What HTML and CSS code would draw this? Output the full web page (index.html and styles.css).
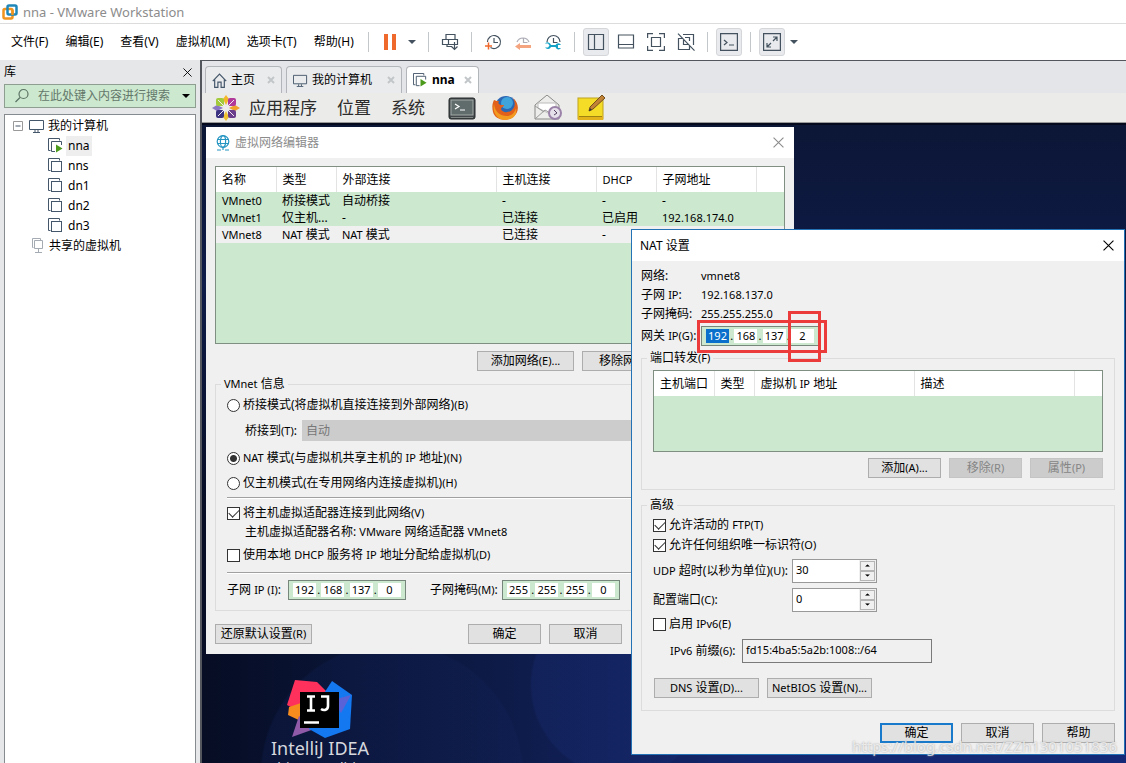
FILE: index.html
```html
<!DOCTYPE html>
<html lang="zh-CN">
<head>
<meta charset="utf-8">
<title>nna - VMware Workstation</title>
<link rel="stylesheet" href="styles.css">
</head>
<body>
<svg class="defs" aria-hidden="true">
  <symbol id="i-vm" viewBox="0 0 16 16"><path d="M2.500 12.500H.5V.5h11v2" fill="none" stroke="#44566a"/><rect x="3.500" y="3.500" width="10" height="10" fill="#fff" stroke="#44566a"/></symbol>
  <symbol id="i-vmrun" viewBox="0 0 16 16"><path d="M2.500 12.500H.5V.5h11v2M7 13.500H3.500v-10h10V7" fill="none" stroke="#44566a"/><path d="M8 6.500v8l6.500-4z" fill="#4c9a1c"/></symbol>
  <symbol id="i-monitor" viewBox="0 0 16 14"><path d="M.5 1.500h14v9H.5zM4 13.500h7M6 11v2M9 11v2" fill="none" stroke="#44566a"/></symbol>
  <symbol id="i-x" viewBox="0 0 10 10"><path d="M.5.5l9 9M9.500.5l-9 9" fill="none" stroke="currentColor"/></symbol>
  <symbol id="i-xb" viewBox="0 0 8 8"><path d="M1 1l6 6M7 1L1 7" fill="none" stroke="currentColor" stroke-width="2"/></symbol>
  <symbol id="i-down" viewBox="0 0 8 4"><path d="M0 0h8L4 4z" fill="currentColor"/></symbol>
  <symbol id="i-up" viewBox="0 0 8 4"><path d="M0 4h8L4 0z" fill="currentColor"/></symbol>
  <symbol id="i-clock" viewBox="0 0 18 18"><path d="M3.500 9a6.500 6.500 0 1 1 3 5.500M10 5v4.500h4" fill="none" stroke="currentColor" stroke-width="1.200"/></symbol>
</svg>

<header class="titlebar">
  <svg class="logo" viewBox="0 0 16 16"><rect x="1.500" y="5" width="9" height="9.500" rx="1.500" fill="none" stroke="#f0941e" stroke-width="2.500"/><rect x="5.500" y="1.500" width="9" height="9" rx="1.500" fill="none" stroke="#1e86b8" stroke-width="2.500"/><path d="M10.500 6v5" stroke="#f0941e" stroke-width="2.500"/></svg>
  <h1>nna - VMware Workstation</h1>
</header>

<div class="menubar">
  <nav class="menu">
    <a href="#">文件(F)</a><a href="#">编辑(E)</a><a href="#">查看(V)</a><a href="#">虚拟机(M)</a><a href="#">选项卡(T)</a><a href="#">帮助(H)</a>
  </nav>
  <div class="toolbar">
    <i class="sep"></i>
    <button aria-label="暂停"><svg viewBox="0 0 18 18"><path d="M3 1h4v16H3zM11 1h4v16h-4z" fill="#f0692c"/></svg></button>
    <button class="caret" aria-label="电源选项"><svg viewBox="0 0 8 4"><use href="#i-down"/></svg></button>
    <i class="sep"></i>
    <button aria-label="发送按键"><svg viewBox="0 0 18 18"><path d="M5 6.500V1.500h9v5M1.500 6.500h6v5h-6zM8 6.500h8.500v5H8M6 11.500v2h5M13.500 9v7.500M10.500 13.500l3 3 3-3" fill="none" stroke="#44525f" stroke-width="1.200"/></svg></button>
    <i class="sep"></i>
    <button aria-label="拍摄快照"><svg viewBox="0 0 18 18"><use href="#i-clock"/><path d="M1 13h7M4.500 9.500v7" stroke="#f0692c" stroke-width="1.500"/></svg></button>
    <button aria-label="恢复快照" class="faded"><svg viewBox="0 0 18 18"><path d="M3 9a6.500 6.500 0 0 1 12 0M9.500 5v4.500h4" fill="none" stroke="#778" stroke-width="1.200"/><path d="M1 13.500L6 10v2h11v3H6v2z" fill="#f0692c"/></svg></button>
    <button aria-label="管理快照"><svg viewBox="0 0 18 18"><path d="M3 9a6.500 6.500 0 1 1 13 0M9.500 5v4.500h4" fill="none" stroke="#44525f" stroke-width="1.200"/><path d="M1 10.500h3l1.500 2-1.500 2H1a3.500 3.500 0 0 0 6-.5h4.500a3 3 0 0 0 5.500 1h-3v-3h3a3 3 0 0 0-5.500 0H7a3.500 3.500 0 0 0-6-1.500z" fill="#14a3c7"/></svg></button>
    <i class="sep"></i>
    <button class="on" aria-label="显示库"><svg viewBox="0 0 18 18"><path d="M1.500 1.500h15v15h-15zM7.500 1.500v15" fill="none" stroke="#44525f" stroke-width="1.200"/></svg></button>
    <button aria-label="缩略图栏"><svg viewBox="0 0 18 18"><path d="M1.500 2h15v13h-15zM1.500 11.500h15" fill="none" stroke="#44525f" stroke-width="1.200"/></svg></button>
    <button aria-label="全屏"><svg viewBox="0 0 18 18"><path d="M.6 5V.6H6M12 .6h5.400V5M17.400 13v4.400H12M6 17.400H.6V13M4.500 4.500h9v9h-9z" fill="none" stroke="#44525f" stroke-width="1.200"/></svg></button>
    <button aria-label="Unity"><svg viewBox="0 0 18 18"><path d="M6 1.500h10.500V12M8 4.500H12.500V8M1.500 5v11.500H12.500V13M1.500 5.500H5M6.500 7v4.500H11M1 .6l16.500 17" fill="none" stroke="#44525f" stroke-width="1.200"/></svg></button>
    <i class="sep"></i>
    <button class="on" aria-label="控制台"><svg viewBox="0 0 18 18"><path d="M.6 .6h16.800v16.800H.6zM4 7l3 2.500L4 12M9 12h5" fill="none" stroke="#44525f" stroke-width="1.200"/></svg></button>
    <i class="sep"></i>
    <button class="on" aria-label="拉伸"><svg viewBox="0 0 18 18"><path d="M.6 .6h16.800v16.800H.6zM10 4h4v4M14 4l-4 4M8 14H4v-4M4 14l4-4" fill="none" stroke="#44525f" stroke-width="1.200"/></svg></button>
    <button class="caret" aria-label="拉伸选项"><svg viewBox="0 0 8 4"><use href="#i-down"/></svg></button>
  </div>
</div>

<div class="main">
  <aside class="library">
    <div class="lib-head"><h2>库</h2><button aria-label="关闭库"><svg viewBox="0 0 10 10"><use href="#i-x"/></svg></button></div>
    <label class="search">
      <svg class="mag" viewBox="0 0 16 16"><circle cx="9.500" cy="6" r="4.500" fill="none" stroke="#5c7263" stroke-width="1.200"/><path d="M6 9.500L1.500 14" stroke="#5c7263" stroke-width="1.200"/></svg>
      <input type="text" aria-label="搜索" placeholder="在此处键入内容进行搜索">
      <svg class="drop" viewBox="0 0 8 4"><use href="#i-down"/></svg>
    </label>
    <ul class="tree">
      <li><svg class="box" viewBox="0 0 10 10"><path d="M.5.5h9v9h-9z" fill="#fff" stroke="#999"/><path d="M2.500 5h5" stroke="#456"/></svg><svg class="ic mon" viewBox="0 0 16 14"><use href="#i-monitor"/></svg><span>我的计算机</span></li>
      <li class="vm sel"><svg class="ic" viewBox="0 0 16 16"><use href="#i-vmrun"/></svg><span>nna</span></li>
      <li class="vm"><svg class="ic" viewBox="0 0 16 16"><use href="#i-vm"/></svg><span>nns</span></li>
      <li class="vm"><svg class="ic" viewBox="0 0 16 16"><use href="#i-vm"/></svg><span>dn1</span></li>
      <li class="vm"><svg class="ic" viewBox="0 0 16 16"><use href="#i-vm"/></svg><span>dn2</span></li>
      <li class="vm"><svg class="ic" viewBox="0 0 16 16"><use href="#i-vm"/></svg><span>dn3</span></li>
      <li class="shared"><svg class="ic" viewBox="0 0 16 16"><path d="M3.500 9.500h-1v-9h8v1.500M4.500 2.500h8v8h-8zM8.500 11v3M5 14.500h7" fill="none" stroke="#a5abb2"/></svg><span>共享的虚拟机</span></li>
    </ul>
  </aside>

  <main class="content">
    <div class="tabs">
      <div class="tab"><svg class="home" viewBox="0 0 14 14"><path d="M.7 7.500L7 1l6.300 6.500M2.500 6v7.400H5.500V8.500h3v4.900h3V6" fill="none" stroke="#44566a" stroke-width="1.100"/></svg><span>主页</span><button aria-label="关闭主页"><svg viewBox="0 0 8 8"><use href="#i-xb"/></svg></button></div>
      <div class="tab wide"><svg viewBox="0 0 16 14"><use href="#i-monitor"/></svg><span>我的计算机</span><button aria-label="关闭我的计算机"><svg viewBox="0 0 8 8"><use href="#i-xb"/></svg></button></div>
      <div class="tab active"><svg viewBox="0 0 16 16"><use href="#i-vmrun"/></svg><span>nna</span><button aria-label="关闭 nna"><svg viewBox="0 0 8 8"><use href="#i-xb"/></svg></button></div>
    </div>
    <div class="guestbar">
      <svg class="centos" viewBox="0 0 28 26"><g><path d="M14 0l3 4-3 6-3-6z" fill="#f5b72a"/><path d="M14 26l3-4-3-6-3 6z" fill="#efc031"/><path d="M0 13l5-3 6 3-6 3z" fill="#8b77c4"/><path d="M28 13l-5-3-6 3 6 3z" fill="#f0a22c"/></g><rect x="4" y="3" width="8" height="8" rx="2" fill="#a3cb3c"/><rect x="16" y="3" width="8" height="8" rx="2" fill="#b0399a"/><rect x="4" y="15" width="8" height="8" rx="2" fill="#3c3480"/><rect x="16" y="15" width="8" height="8" rx="2" fill="#6a3c8c"/><path d="M6 5l8 8 8-8M6 21l8-8 8 8" stroke="#f3e9f0" fill="none"/></svg>
      <span class="gm">应用程序</span><span class="gm">位置</span><span class="gm">系统</span>
      <svg class="app" viewBox="0 0 28 26"><rect x="1" y="3" width="26" height="21" rx="2" fill="#42484a" stroke="#25292a"/><rect x="3" y="5" width="22" height="15" fill="#5f6c6b" stroke="#a4aaa7"/><path d="M7 9l4 2.500L7 14M12 15h5" fill="none" stroke="#fff" stroke-width="1.200"/><path d="M3 22.500h22" stroke="#808684"/></svg>
      <svg class="app" viewBox="0 0 28 26"><circle cx="15" cy="12" r="11" fill="#2c67b3"/><circle cx="16" cy="8" r="6" fill="#3fa3dc"/><path d="M3 5c2 1 3 1 5 1-1 2-1 3 2 4l3 0c0 2-3 2-3 4 1 4 8 4 11 1 4-4 3-8 1-12 7 6 6 15 0 19-7 5-18 3-20-5-1-4-1-8 1-12z" fill="#e0601c"/><path d="M3 9c1 8 6 12 13 12 5 0 8-4 9-8 2 9-6 12-11 12C6 25 1 17 3 9z" fill="#f39a21"/></svg>
      <svg class="app" viewBox="0 0 28 26"><path d="M1 10L13 0l12 10v14H1z" fill="#ededeb" stroke="#888a85"/><path d="M4 8h18v7l-8 3-10-5z" fill="#fff" stroke="#bbb"/><path d="M1 24l10-9 7 4M1 11l9 6" fill="none" stroke="#999"/><circle cx="21" cy="18" r="6" fill="#e6e0ea" stroke="#9b82a8" stroke-width="2"/><path d="M20 15l3 3-3 2" fill="none" stroke="#55415f"/></svg>
      <svg class="app" viewBox="0 0 28 26"><rect x="1" y="3" width="25" height="21" fill="#f4dc27" stroke="#bfa31a"/><path d="M1 21h25v4H1z" fill="#e3b31c"/><path d="M2 21.500h23" stroke="#9f8210"/><path d="M25 0l3 3-12 11-4 2 1-4z" fill="#bf8237" stroke="#75501c"/><path d="M12 16l1-3 2 2z" fill="#333"/></svg>
    </div>

    <div class="desktop">
      <div class="shortcut">
        <svg viewBox="0 0 66 58"><path d="M8 0l22 2 12 12-14 26L0 25z" fill="#fe315d"/><path d="M2 27l12-4 4 20L1 35z" fill="#f68b1e"/><path d="M12 36l18 12L5 57z" fill="#8f5aa8"/><path d="M45 1l20 14-2 34-25 9-16-9 10-28z" fill="#1479f0"/><path d="M46 20l18-5-10 18z" fill="#5a62d8"/><rect x="13" y="12" width="39" height="36" fill="#000"/><path d="M20 16.500h8M24 16.500V30M20 30.500h8M34 16.500h7V26c0 4-4 5-7 3M17 42.500h15" fill="none" stroke="#fff" stroke-width="2.600"/></svg>
        <span>IntelliJ IDEA</span><span class="second">Ultimate Edition</span>
      </div>

      <section class="win editor">
        <header class="wbar"><svg class="globe" viewBox="0 0 14 16"><g fill="none" stroke="#2595c2" stroke-width="1.200"><circle cx="7" cy="6.500" r="5.800"/><ellipse cx="7" cy="6.500" rx="2.600" ry="5.800"/><path d="M1.500 4.500h11M1.500 8.500h11M1 15h4M9 15h4M7 12v3"/></g></svg><h2>虚拟网络编辑器</h2><button aria-label="关闭"><svg viewBox="0 0 10 10"><use href="#i-x"/></svg></button></header>
        <div class="wbody">
          <div class="list nets">
            <table>
              <colgroup><col class="c60"><col class="c60"><col class="c160"><col class="c100"><col class="c60"><col class="c100"><col></colgroup>
              <thead><tr><th>名称</th><th>类型</th><th>外部连接</th><th>主机连接</th><th><span class="en">DHCP</span></th><th>子网地址</th><th></th></tr></thead>
              <tbody>
                <tr><td class="en">VMnet0</td><td>桥接模式</td><td>自动桥接</td><td>-</td><td>-</td><td>-</td><td></td></tr>
                <tr><td class="en">VMnet1</td><td>仅主机...</td><td>-</td><td>已连接</td><td>已启用</td><td class="en">192.168.174.0</td><td></td></tr>
                <tr class="picked"><td class="en">VMnet8</td><td><span class="en">NAT</span> 模式</td><td><span class="en">NAT</span> 模式</td><td>已连接</td><td>-</td><td></td><td></td></tr>
              </tbody>
            </table>
          </div>
          <div class="btns netbtns"><button class="btn b98">添加网络<span class="en">(E)...</span></button><button class="btn b98">移除网络<span class="en">(O)</span></button></div>
          <fieldset class="info">
            <legend><span class="en">VMnet</span> 信息</legend>
            <label class="opt"><input type="radio" name="mode">桥接模式(将虚拟机直接连接到外部网络)<span class="en">(B)</span></label>
            <div class="bridge"><label for="br">桥接到<span class="en">(T)</span>:</label><select id="br" disabled><option>自动</option></select></div>
            <label class="opt"><input type="radio" name="mode" checked><span class="en">NAT</span>&nbsp;模式(与虚拟机共享主机的&nbsp;<span class="en">IP</span>&nbsp;地址)<span class="en">(N)</span></label>
            <label class="opt host"><input type="radio" name="mode">仅主机模式(在专用网络内连接虚拟机)<span class="en">(H)</span></label>
            <hr>
            <label class="opt adapt"><input type="checkbox" checked>将主机虚拟适配器连接到此网络<span class="en">(V)</span></label>
            <p class="adname">主机虚拟适配器名称: <span class="en">VMware</span> 网络适配器 <span class="en">VMnet8</span></p>
            <label class="opt dhcp"><input type="checkbox">使用本地&nbsp;<span class="en">DHCP</span>&nbsp;服务将&nbsp;<span class="en">IP</span>&nbsp;地址分配给虚拟机<span class="en">(D)</span></label>
            <hr>
            <div class="subnet">
              <span>子网 <span class="en">IP (I)</span>:</span>
              <div class="ip"><input aria-label="子网 IP 1" value="192">.<input aria-label="子网 IP 2" value="168">.<input aria-label="子网 IP 3" value="137">.<input aria-label="子网 IP 4" value="0"></div>
              <span class="masklab">子网掩码<span class="en">(M)</span>:</span>
              <div class="ip"><input aria-label="掩码 1" value="255">.<input aria-label="掩码 2" value="255">.<input aria-label="掩码 3" value="255">.<input aria-label="掩码 4" value="0"></div>
            </div>
          </fieldset>
          <div class="btns foot"><button class="btn b98 first">还原默认设置<span class="en">(R)</span></button><button class="btn">确定</button><button class="btn">取消</button></div>
        </div>
      </section>

      <section class="win nat">
        <header class="wbar"><h2>NAT 设置</h2><button aria-label="关闭"><svg viewBox="0 0 10 10"><use href="#i-x"/></svg></button></header>
        <div class="wbody">
          <dl class="facts">
            <dt>网络:</dt><dd>vmnet8</dd>
            <dt>子网 <span class="en">IP</span>:</dt><dd>192.168.137.0</dd>
            <dt>子网掩码:</dt><dd>255.255.255.0</dd>
          </dl>
          <div class="gateway"><span>网关 <span class="en">IP(G)</span>:</span>
            <div class="ip"><input class="hl" aria-label="网关 1" value="192">.<input aria-label="网关 2" value="168">.<input aria-label="网关 3" value="137">.<input aria-label="网关 4" value="2"></div>
          </div>
          <fieldset class="ports">
            <legend>端口转发<span class="en">(F)</span></legend>
            <div class="list">
              <table>
                <colgroup><col class="c60"><col class="c40"><col class="c160"><col class="c160"><col></colgroup>
                <thead><tr><th>主机端口</th><th>类型</th><th>虚拟机 <span class="en">IP</span> 地址</th><th>描述</th><th></th></tr></thead>
              </table>
            </div>
            <div class="btns"><button class="btn">添加<span class="en">(A)...</span></button><button class="btn" disabled>移除<span class="en">(R)</span></button><button class="btn" disabled>属性<span class="en">(P)</span></button></div>
          </fieldset>
          <fieldset class="adv">
            <legend>高级</legend>
            <label class="opt"><input type="checkbox" checked>允许活动的&nbsp;<span class="en">FTP(T)</span></label>
            <label class="opt"><input type="checkbox" checked>允许任何组织唯一标识符<span class="en">(O)</span></label>
            <div class="num"><label for="udp"><span class="en">UDP</span> 超时(以秒为单位)<span class="en">(U)</span>:</label><div class="spin"><input id="udp" value="30"><div><button aria-label="增加"><svg viewBox="0 0 8 4"><use href="#i-up"/></svg></button><button aria-label="减少"><svg viewBox="0 0 8 4"><use href="#i-down"/></svg></button></div></div></div>
            <div class="num"><label for="port">配置端口<span class="en">(C)</span>:</label><div class="spin"><input id="port" value="0"><div><button aria-label="增加"><svg viewBox="0 0 8 4"><use href="#i-up"/></svg></button><button aria-label="减少"><svg viewBox="0 0 8 4"><use href="#i-down"/></svg></button></div></div></div>
            <label class="opt"><input type="checkbox">启用&nbsp;<span class="en">IPv6(E)</span></label>
            <div class="prefix"><label for="pre"><span class="en">IPv6</span> 前缀<span class="en">(6)</span>:</label><input id="pre" value="fd15:4ba5:5a2b:1008::/64" readonly></div>
            <div class="btns left"><button class="btn b105"><span class="en">DNS</span> 设置<span class="en">(D)...</span></button><button class="btn b105"><span class="en">NetBIOS</span> 设置<span class="en">(N)...</span></button></div>
          </fieldset>
          <div class="btns foot"><button class="btn default">确定</button><button class="btn">取消</button><button class="btn">帮助</button></div>
        </div>
        <i class="mark mark-ip"></i><i class="mark mark-last"></i>
      </section>
      <div class="credit">https://blog.csdn.net/ZZh1301051836</div>
    </div>
  </main>
</div>
</body>
</html>
```
FILE: styles.css
```css
* { box-sizing: border-box; }
html, body { height: 100%; }
body {
  margin: 0; display: flex; flex-direction: column; overflow: hidden;
  background: #fff; color: #000;
  font: 12px/16px "Noto Sans", "Noto Sans CJK SC", sans-serif;
}
button, input, select { font: inherit; color: inherit; margin: 0; padding: 0; }
button { background: none; border: 0; display: flex; align-items: center; justify-content: center; }
svg { display: block; flex: none; }
h1, h2, p, dl, dd, ul, fieldset { margin: 0; padding: 0; }
h1, h2 { font-size: 12px; font-weight: 400; }
.defs { position: absolute; width: 0; height: 0; }
.en { font-size: 11px; }

.titlebar { display: flex; align-items: center; gap: 5px; height: 23px; padding-left: 2px; color: #8c8c8c; }
.titlebar h1 { font-size: 13px; }
.logo { width: 16px; height: 16px; }

.menubar { display: flex; align-items: center; height: 37px; border-top: 1px solid #dcdcdc; }
.menu { display: flex; gap: 17px; flex: 0 0 364px; padding-left: 11px; }
.menu a { color: #000; text-decoration: none; white-space: nowrap; }
.toolbar { display: flex; align-items: center; gap: 4px; color: #44525f; }
.toolbar button { width: 26px; height: 28px; border: 1px solid transparent; border-radius: 3px; }
.toolbar button svg { width: 18px; height: 18px; }
.toolbar .on { background: #e8eaed; border-color: #d4d6d9; }
.toolbar .caret { width: 13px; justify-content: flex-start; }
.toolbar .caret svg { width: 8px; height: 4px; }
.toolbar .faded { opacity: .6; }
.sep { width: 1px; height: 20px; margin: 0 4px; background: #c4c7ca; }

.main { display: flex; flex: 1; min-height: 0; }
.library { display: flex; flex-direction: column; flex: 0 0 200px; min-width: 0; padding: 0 4px; background: #e6e7e9; }
.lib-head { display: flex; align-items: center; justify-content: space-between; height: 24px; padding-right: 4px; }
.lib-head svg { width: 9px; height: 9px; }
.search { display: flex; align-items: center; height: 24px; padding: 0 5px 0 9px; background: #cce8cf; border: 1px solid #8e9e90; }
.search input { flex: 1; min-width: 0; border: 0; background: none; margin-left: 8px; }
.search input::placeholder { color: #63776a; opacity: 1; }
.mag { width: 16px; height: 16px; }
.drop { width: 8px; height: 4px; }
.tree { flex: 1; margin-top: 6px; padding: 1px 0 0 8px; list-style: none; background: #fff; border: 1px solid #868b90; border-bottom: 0; }
.tree li { display: flex; align-items: center; height: 20px; }
.box { width: 10px; height: 10px; margin-right: 6px; }
.ic { width: 16px; height: 16px; margin-right: 3px; }
.mon { height: 14px; }
.vm { padding-left: 35px; }
.tree .vm .ic { margin-right: 2px; }
.tree .vm span { padding: 1px 2px; }
.tree .vm.sel span { background: #eee; }
.shared { padding-left: 17px; }
.tree span { line-height: 18px; }

.content { display: flex; flex: 1; flex-direction: column; min-width: 0; border: 1px solid #53565c; border-width: 1px 0 0 2px; background: #e4e5e8; }
.tabs { display: flex; gap: 4px; height: 32px; padding: 5px 3px 0; }
.tab { display: flex; align-items: center; width: 77px; padding: 0 6px; border: 1px solid #b2b5b9; border-bottom: 0; border-radius: 4px 4px 0 0; background: #eaebed; }
.tab svg { width: 15px; height: 15px; }
.tab span { margin-left: 4px; white-space: nowrap; }
.tab button { margin-left: auto; color: #c3c6c9; }
.tab button svg { width: 8px; height: 8px; }
.tab.wide { width: 116px; }
.tab.active { width: 73px; background: #fff; font-weight: 700; }
.guestbar { display: flex; align-items: center; height: 30px; padding-left: 10px; background: #ebebea; border-bottom: 1px solid #9a9a9a; }
.centos { width: 28px; height: 26px; margin-right: 9px; }
.gm { margin-right: 20px; font-size: 17px; line-height: 24px; color: #2b2b2b; white-space: nowrap; }
.app { width: 28px; height: 26px; margin: 0 12px 0 3px; }

.desktop { position: relative; flex: 1; min-height: 0; overflow: hidden; border-top: 2px solid #050a1c;
  background: radial-gradient(circle at 190px 650px, #13235c44 0 130px, transparent 132px), radial-gradient(circle at 420px 560px, #1c2f7a44 0 90px, transparent 92px), linear-gradient(180deg, #0c1636 0, #0f1b48 25%, transparent 60%), linear-gradient(90deg, #060d24, #0d1a45 30%, #14266e 60%, #142a78); }
.shortcut { position: absolute; left: 48px; top: 555px; width: 140px; display: flex; flex-direction: column; align-items: center; color: #d6d8de; font-size: 18px; line-height: 20px; white-space: nowrap; }
.shortcut svg { width: 66px; height: 58px; }
.shortcut .second { font-size: 14px; }

.win { position: absolute; background: #f0f0f0; }
.wbar { display: flex; align-items: center; height: 31px; padding: 0 10px; background: #fff; }
.wbar h2 { flex: 1; }
.wbar button svg { width: 11px; height: 11px; }
.wbody { display: flex; flex-direction: column; }
.editor { left: 4px; top: 2px; width: 588px; }
.editor .wbar { color: #8c8c8c; }
.globe { width: 14px; height: 16px; margin-right: 5px; }
.editor .wbody { padding: 8px 9px 10px; }
.nat { left: 429px; top: 104px; width: 494px; border: 1px solid #2272b5; }
.nat .wbar { padding: 0 10px 0 8px; }
.nat .wbody { padding: 5px 9px 11px; }

.list { border: 1px solid #7f8f82; background: #cce8cf; }
.nets { height: 178px; }
.ports .list { height: 82px; }
table { width: 100%; table-layout: fixed; border-collapse: collapse; }
th { height: 25px; padding: 0 6px; text-align: left; font-weight: 400; background: #fff; border-right: 1px solid #e3e3e3; white-space: nowrap; }
th:last-child { border-right: 0; }
td { height: 17px; padding: 0 6px; line-height: 17px; white-space: nowrap; }
.picked { background: #f0f0f0; }
.c40 { width: 40px; }
.c60 { width: 60px; }
.c100 { width: 100px; }
.c160 { width: 160px; }

.btns { display: flex; justify-content: flex-end; gap: 8px; }
.btns.left { justify-content: flex-start; }
.btn { width: 73px; height: 20px; background: #e1e1e1; border: 1px solid #adadad; white-space: pre; }
.btn:disabled { background: #ccc; border-color: #c4c4c4; color: #858585; }
.b98 { width: 97px; }
.b105 { width: 105px; }
.btn.default { border: 2px solid #1979ca; }
.netbtns { justify-content: flex-start; margin: 7px 0 5px; padding-left: 262px; }

fieldset { min-width: 0; border: 1px solid #dcdcdc; }
legend { padding: 0 3px; }
.opt { display: flex; align-items: center; height: 20px; white-space: nowrap; }
input[type="radio"], input[type="checkbox"] { appearance: none; width: 13px; height: 13px; margin: 0 3px 0 0; flex: none; border: 1px solid #333; background: #fff; }
input[type="radio"] { border-radius: 50%; }
input[type="radio"]:checked { background: radial-gradient(circle, #333 0 3px, #fff 4px); }
input[type="checkbox"]:checked::before { content: ""; display: block; width: 9px; height: 5px; margin: 1px; border: solid #333; border-width: 0 0 1px 1px; transform: rotate(-45deg); }
hr { width: 100%; height: 2px; margin: 0; border: 0; border-top: 1px solid #a0a0a0; border-bottom: 1px solid #fff; }

.info { padding: 0 0 10px 11px; }
.info legend { margin-left: -6px; }
.info > .opt { margin-top: 3px; }
.bridge { display: flex; align-items: center; gap: 5px; margin: 5px 0 7px; padding-left: 18px; }
.bridge select { flex: 1; appearance: none; height: 21px; padding: 0 4px; border: 0; background: #ccc; color: #777; opacity: 1; }
.info > .host { margin: 5px 0 4px; }
.info > .adapt { margin-top: 4px; }
.adname { padding-left: 18px; line-height: 18px; white-space: pre; }
.info > .dhcp { margin: 4px 0 7px; }
.subnet { display: flex; align-items: center; height: 20px; margin-top: 6px; white-space: nowrap; }
.subnet > span:first-child { width: 61px; }
.masklab { width: 72px; margin-left: 24px; }
.ip { display: flex; align-items: center; justify-content: space-between; width: 118px; height: 20px; padding: 0 4px; border: 1px solid #76867a; background: #cce8cf; font-size: 11px; }
.ip input { width: 23px; height: 14px; border: 0; background: #fff; text-align: center; }
.editor .foot { margin-top: 13px; padding-right: 163px; }
.foot .first { margin-right: auto; }

.facts { display: grid; grid-template-columns: 60px 1fr; line-height: 19px; white-space: nowrap; }
.facts dd { font-size: 11px; }
.gateway { display: flex; align-items: center; height: 22px; margin-top: 2px; white-space: nowrap; }
.gateway > span { width: 60px; }
.ip .hl { background: #0a70cc; color: #fff; }
.ports { padding: 4px 11px 11px; margin-top: 3px; }
.ports .btns { margin-top: 6px; }
.ports legend, .adv legend { margin-left: -6px; }
.adv { display: flex; flex-direction: column; padding: 2px 11px 12px; margin-top: 7px; }
.num { display: flex; align-items: center; height: 29px; white-space: nowrap; }
.num:nth-of-type(1) { margin-top: 1px; }
.num > label { width: 139px; }
.spin { display: flex; width: 85px; height: 24px; border: 1px solid #999; background: #fff; }
.spin input { flex: 1; min-width: 0; height: 20px; padding: 0 3px; border: 0; font-size: 11px; }
.spin > div { display: flex; flex-direction: column; width: 17px; background: #f0f0f0; padding: 1px; }
.spin button { flex: 1; border: 1px solid #b5b5b5; }
.spin svg { width: 5px; height: 3px; }
.prefix { display: flex; align-items: center; gap: 5px; height: 24px; margin-top: 5px; padding-left: 17px; white-space: nowrap; }
.prefix > label { width: 67px; }
.prefix input { width: 190px; height: 24px; padding: 0 3px 4px; border: 1px solid #7a7a7a; background: #f0f0f0; font-size: 11px; }
.adv .btns { margin-top: 15px; padding-left: 1px; }
.nat .foot { margin-top: 12px; }

.mark { position: absolute; border: 3px solid #ec3b3b; }
.mark-ip { left: 65px; top: 90px; width: 130px; height: 33px; }
.mark-last { left: 156px; top: 81px; width: 33px; height: 51px; }
.credit { position: absolute; right: 9px; bottom: 7px; font-size: 15px; line-height: 20px; color: #ffffffb0; text-shadow: 0 0 2px #9a9a9a; white-space: nowrap; }
```
